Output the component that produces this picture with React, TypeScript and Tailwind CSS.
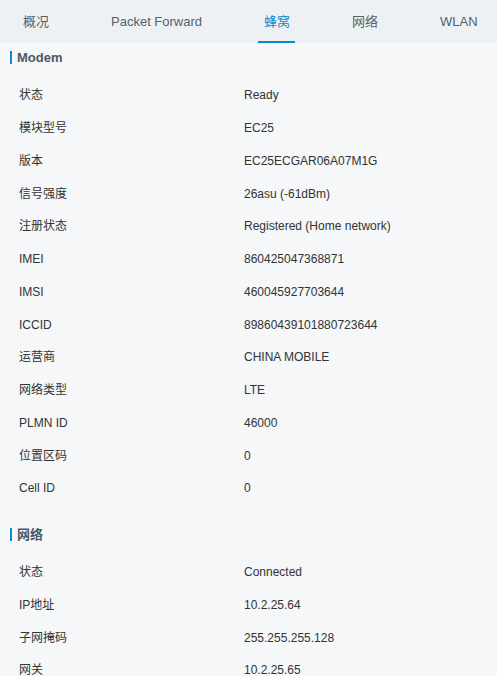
const FONT = 'font-["Liberation_Sans","Noto_Sans_CJK_SC",sans-serif]'

const TABS = ['概况', 'Packet Forward', '蜂窝', '网络', 'WLAN']

const MODEM: [string, string][] = [
  ['状态', 'Ready'],
  ['模块型号', 'EC25'],
  ['版本', 'EC25ECGAR06A07M1G'],
  ['信号强度', '26asu (-61dBm)'],
  ['注册状态', 'Registered (Home network)'],
  ['IMEI', '860425047368871'],
  ['IMSI', '460045927703644'],
  ['ICCID', '89860439101880723644'],
  ['运营商', 'CHINA MOBILE'],
  ['网络类型', 'LTE'],
  ['PLMN ID', '46000'],
  ['位置区码', '0'],
  ['Cell ID', '0'],
]

const NETWORK: [string, string][] = [
  ['状态', 'Connected'],
  ['IP地址', '10.2.25.64'],
  ['子网掩码', '255.255.255.128'],
  ['网关', '10.2.25.65'],
]

export default function App() {
  return (
    <div className={`${FONT} w-[497px] h-[676px] overflow-hidden bg-[#f5f7f8]`}>
      {/* Tabs */}
      <div className="h-[43px] bg-[#eef1f3] flex items-center pl-[23px] gap-[62px] whitespace-nowrap">
        {TABS.map(t => {
          const active = t === '蜂窝'
          return (
            <div key={t} className="relative h-full flex items-center">
              <span className={`text-[13px] ${active ? 'text-[#0a8ad2]' : 'text-[#56606a]'}`}>{t}</span>
              {active && <span className="absolute left-[-6px] right-[-5px] bottom-0 h-[2px] bg-[#0a8ad2]" />}
            </div>
          )
        })}
      </div>

      <Section title="Modem" rows={MODEM} first />
      <Section title="网络" rows={NETWORK} />
    </div>
  )
}

function Section({ title, rows, first }: { title: string; rows: [string, string][]; first?: boolean }) {
  return (
    <div>
      <div
        className={`${first ? 'mt-[8px]' : 'mt-[23px]'} mb-[15px] ml-[10px] h-[13px] border-l-2 border-[#0a8ad2] pl-[5px] flex items-center text-[13px] font-bold text-[#4a5865]`}
      >
        {title}
      </div>
      {rows.map(([k, v], i) => (
        <div key={i} className="h-[32.75px] flex items-center text-[12px] text-[#333]">
          <span className="w-[244px] pl-[19px]">{k}</span>
          <span>{v}</span>
        </div>
      ))}
    </div>
  )
}
